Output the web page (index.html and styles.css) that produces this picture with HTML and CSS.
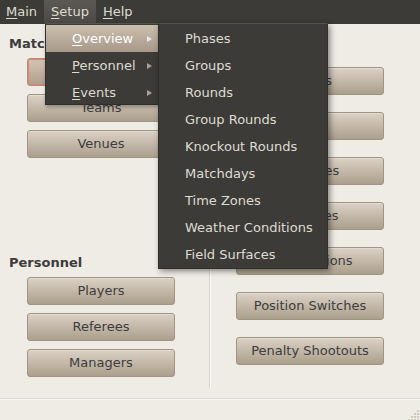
FILE: index.html
```html
<!DOCTYPE html>
<html>
<head>
<meta charset="utf-8">
<link rel="stylesheet" href="styles.css">
</head>
<body>
<div class="window">
  <div class="menubar">
    <span class="mi"><u>M</u>ain</span>
    <span class="mi active"><u>S</u>etup</span>
    <span class="mi"><u>H</u>elp</span>
  </div>
  <div class="content">
    <div class="col left">
      <div class="section">
        <div class="heading">Matches</div>
        <div class="btns">
          <div class="btn focus"></div>
          <div class="btn">Teams</div>
          <div class="btn">Venues</div>
        </div>
      </div>
      <div class="section personnel">
        <div class="heading">Personnel</div>
        <div class="btns">
          <div class="btn">Players</div>
          <div class="btn">Referees</div>
          <div class="btn">Managers</div>
        </div>
      </div>
    </div>
    <div class="vsep"></div>
    <div class="col right">
      <div class="btns wide">
        <div class="btn">Strikes</div>
        <div class="btn">Goals</div>
        <div class="btn">Penalties</div>
        <div class="btn">Offenses</div>
        <div class="btn">Substitutions</div>
        <div class="btn">Position Switches</div>
        <div class="btn">Penalty Shootouts</div>
      </div>
    </div>
  </div>
  <div class="statusbar">
    <svg class="grip" width="12" height="12" viewBox="0 0 12 12">
      <g fill="#cfc8bc">
        <rect x="9" y="0" width="2" height="2"/>
        <rect x="6" y="3" width="2" height="2"/><rect x="9" y="3" width="2" height="2"/>
        <rect x="3" y="6" width="2" height="2"/><rect x="6" y="6" width="2" height="2"/><rect x="9" y="6" width="2" height="2"/>
        <rect x="0" y="9" width="2" height="2"/><rect x="3" y="9" width="2" height="2"/><rect x="6" y="9" width="2" height="2"/><rect x="9" y="9" width="2" height="2"/>
      </g>
    </svg>
  </div>

  <div class="menu m1">
    <div class="item sel"><span><u>O</u>verview</span><i class="arrow"></i></div>
    <div class="item"><span><u>P</u>ersonnel</span><i class="arrow"></i></div>
    <div class="item"><span><u>E</u>vents</span><i class="arrow"></i></div>
  </div>
  <div class="menu m2">
    <div class="item">Phases</div>
    <div class="item">Groups</div>
    <div class="item">Rounds</div>
    <div class="item">Group Rounds</div>
    <div class="item">Knockout Rounds</div>
    <div class="item">Matchdays</div>
    <div class="item">Time Zones</div>
    <div class="item">Weather Conditions</div>
    <div class="item">Field Surfaces</div>
  </div>
</div>
</body>
</html>
```

FILE: styles.css
```css
html, body {
  margin: 0;
  padding: 0;
}
.window {
  width: 420px;
  height: 420px;
  background: #efebe5;
  display: flex;
  flex-direction: column;
  position: relative;
  overflow: hidden;
  font-family: "DejaVu Sans", sans-serif;
  font-size: 13px;
  color: #3c3c3c;
}
.menubar {
  height: 24px;
  flex: none;
  background: #3c3b37;
  display: flex;
  color: #dfdbd2;
}
.mi {
  padding: 0 7px;
  line-height: 23px;
  height: 24px;
}
.mi:first-child {
  padding-left: 6px;
}
.mi.active {
  background: linear-gradient(#5c5953, #4b4944);
}
u {
  text-decoration-thickness: 1px;
  text-underline-offset: 2px;
}
.content {
  flex: 1;
  display: flex;
}
.col {
  display: flex;
  flex-direction: column;
}
.left {
  width: 209px;
  padding-top: 12px;
  box-sizing: border-box;
}
.heading {
  font-weight: bold;
  line-height: 16px;
  padding-left: 9px;
  margin-bottom: 6px;
}
.btns {
  display: flex;
  flex-direction: column;
  gap: 8px;
  padding-left: 27px;
}
.personnel {
  margin-top: 97px;
}
.btn {
  width: 148px;
  height: 28px;
  box-sizing: border-box;
  border: 1px solid #a09482;
  border-radius: 3px;
  background: linear-gradient(#dbd1c5, #ab9f8c);
  text-align: center;
  line-height: 26px;
  color: #3c3c3c;
  box-shadow: inset 0 1px 0 rgba(255,255,255,0.25);
}
.btn.focus {
  background: linear-gradient(#d6c3b4, #b09e8c);
  box-shadow: inset 0 0 0 1px #e5826f;
}
.vsep {
  width: 1px;
  border-left: 1px solid #d9d4cb;
  background: #fbfaf8;
  margin: 8px 0 10px;
}
.right {
  padding-top: 43px;
  padding-left: 25px;
}
.btns.wide {
  gap: 17px;
  padding-left: 0;
}
.statusbar {
  height: 21px;
  flex: none;
  border-top: 1px solid #dcd7ce;
  box-shadow: inset 0 1px 0 #f8f6f3;
  display: flex;
  justify-content: flex-end;
  align-items: flex-end;
}
.grip {
  display: block;
  margin: 0 0 -2px 0;
}
.menu {
  position: absolute;
  background: #3c3b37;
  color: #dfdbd2;
  border: 1px solid #2f2e2b;
  border-top-color: #57544e;
  box-sizing: border-box;
  padding-top: 1px;
}
.m1 {
  left: 45px;
  top: 23px;
  width: 114px;
  height: 82px;
  box-shadow: 1px 2px 4px rgba(0,0,0,0.3);
}
.m2 {
  left: 158px;
  top: 23px;
  width: 170px;
  height: 246px;
  box-shadow: 2px 2px 6px rgba(0,0,0,0.45);
}
.item {
  height: 27px;
  line-height: 27px;
  padding-left: 26px;
  display: flex;
  align-items: center;
  justify-content: space-between;
  padding-right: 6px;
}
.item.sel {
  background: linear-gradient(#cbbfad, #a7998a);
  color: #ffffff;
}
.arrow {
  width: 0;
  height: 0;
  border-left: 5px solid #a8a296;
  border-top: 3.5px solid transparent;
  border-bottom: 3.5px solid transparent;
}
.item.sel .arrow {
  border-left-color: #eee8df;
}
```
